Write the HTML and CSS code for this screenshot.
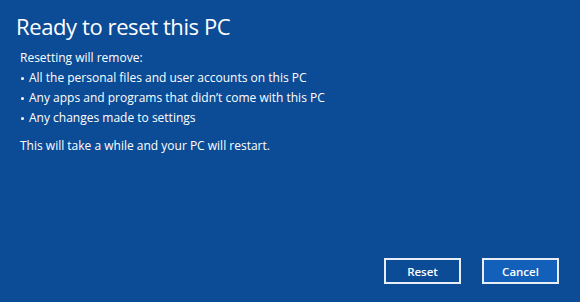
FILE: index.html
```html
<!DOCTYPE html>
<html>
<head>
<meta charset="utf-8">
<link rel="stylesheet" href="styles.css">
</head>
<body>
<div class="screen">
  <h1 class="title">Ready to reset this PC</h1>
  <div class="content">
    <p class="line">Resetting will remove:</p>
    <ul class="list">
      <li>All the personal files and user accounts on this PC</li>
      <li>Any apps and programs that didn’t come with this PC</li>
      <li>Any changes made to settings</li>
    </ul>
    <p class="line note">This will take a while and your PC will restart.</p>
  </div>
  <div class="actions">
    <button class="btn">Reset</button>
    <button class="btn primary">Cancel</button>
  </div>
</div>
</body>
</html>
```
FILE: styles.css
```css
html, body {
  margin: 0;
  padding: 0;
  width: 580px;
  height: 302px;
  overflow: hidden;
  background: #0c4c96;
}
.screen {
  box-sizing: border-box;
  width: 580px;
  height: 302px;
  display: flex;
  flex-direction: column;
  color: #fff;
  font-family: "Open Sans", "Noto Sans", sans-serif;
  padding: 10px 0 0 16px;
}
.title {
  margin: 0;
  font-weight: 400;
  font-size: 22px;
  line-height: 32px;
  letter-spacing: -0.4px;
}
.content {
  padding-left: 4px;
  margin-top: 6px;
  font-size: 12px;
}
.line {
  margin: 0;
  line-height: 20px;
}
.list {
  list-style: none;
  margin: 0;
  padding: 0;
}
.list li {
  line-height: 20px;
  position: relative;
  padding-left: 9px;
}
.list li::before {
  content: "";
  position: absolute;
  left: 1px;
  top: 9px;
  width: 3px;
  height: 3px;
  border-radius: 50%;
  background: #fff;
}
.note {
  margin-top: 8px;
}
.actions {
  margin-top: auto;
  display: flex;
  justify-content: flex-end;
  gap: 21px;
  padding: 0 21px 18px 0;
}
.btn {
  box-sizing: border-box;
  width: 77px;
  height: 26px;
  border: 2px solid #e8eef6;
  background: #0c4c96;
  color: #fff;
  font-family: "Open Sans", "Noto Sans", sans-serif;
  font-size: 11.5px;
  font-weight: 600;
  padding: 0;
}
.btn.primary {
  background: #1360bb;
}
```
